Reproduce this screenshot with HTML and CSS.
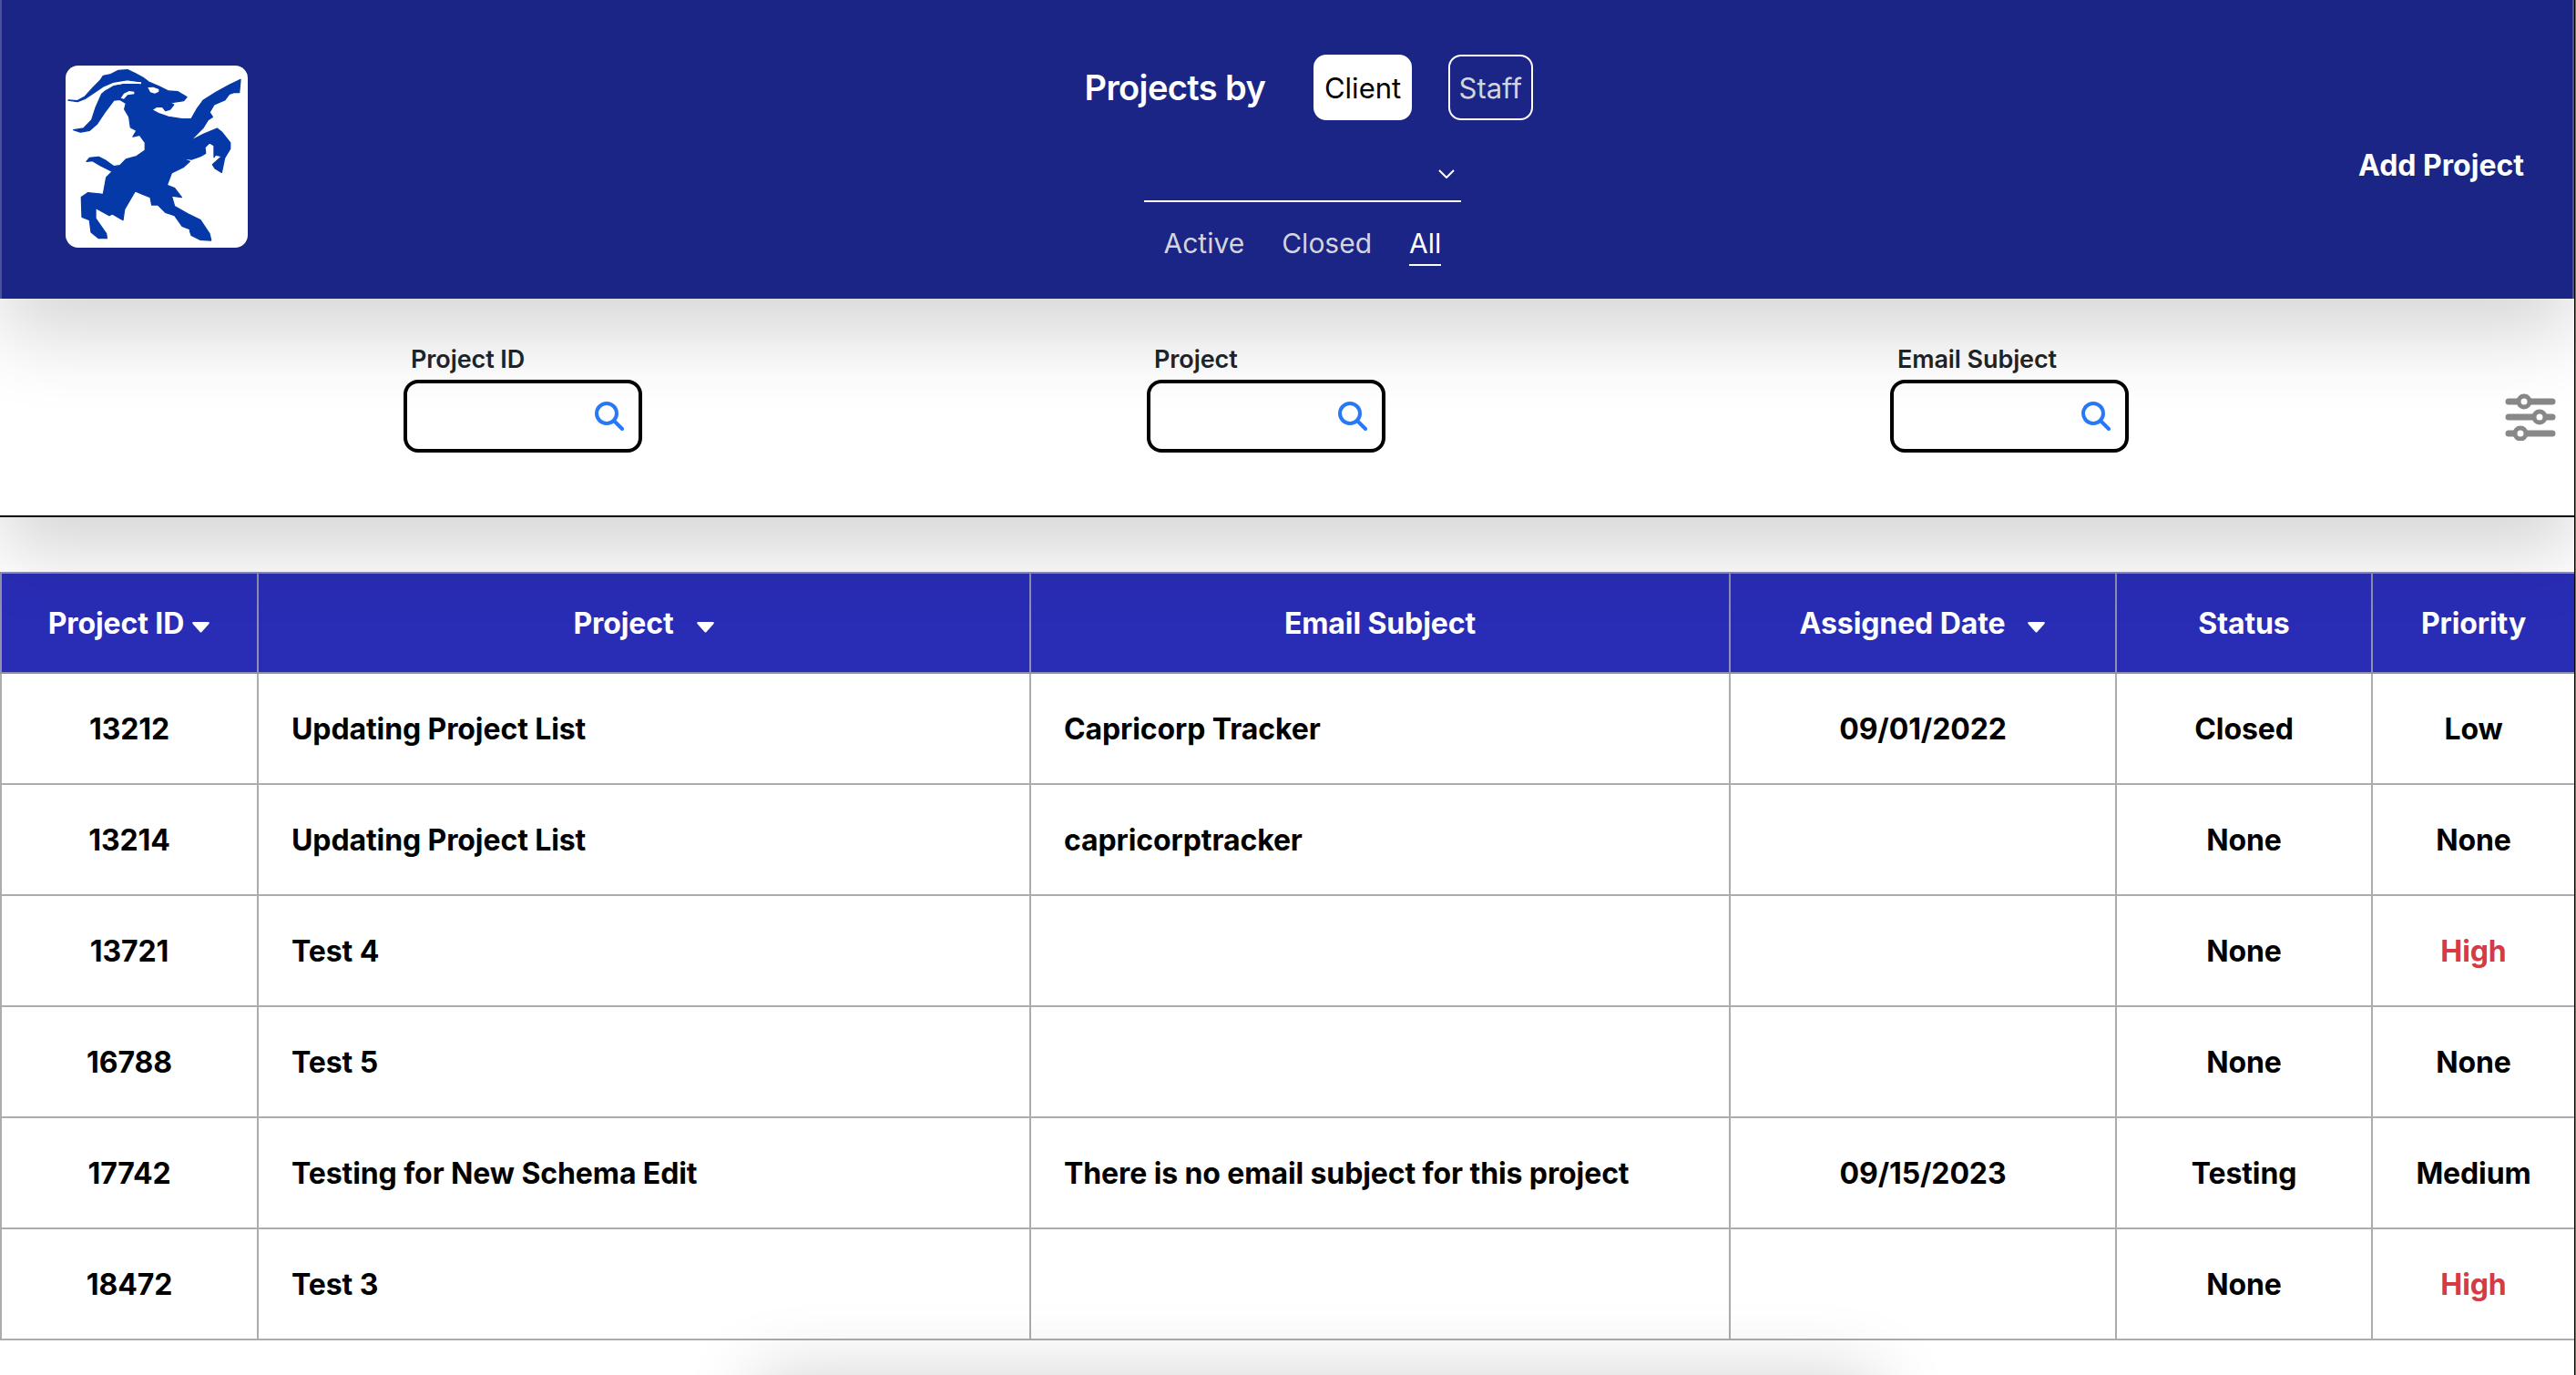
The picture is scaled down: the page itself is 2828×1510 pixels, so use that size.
FILE: index.html
```html
<!DOCTYPE html>
<html>
<head>
  <link rel="stylesheet" href="styles.css">
  <title>Projects</title>
  <meta charset="UTF-8">
</head>
<body>
  <div class="page">
    <header class="topbar">
      <div class="logo">
        <svg class="logo-goat" viewBox="36 36 600 600">
          <path fill="#0639a8" stroke="#0639a8" stroke-width="4" stroke-linejoin="round" d="M45 150 L75 152 L100 138 L125 110 L150 85 L160 70 L185 65 L210 52 L240 50 L265 62 L290 75 L310 90 L345 105 L375 120 L405 122 L435 140 L425 152 L390 157 L375 155 L392 165 L380 180 L365 185 L355 172 L335 172 L320 182 L345 195 L375 205 L420 212 L450 212 L468 180 L490 150 L530 125 L575 100 L612 82 L608 125 L590 125 L575 130 L560 150 L525 165 L510 190 L520 205 L505 215 L490 240 L455 275 L445 285 L490 262 L535 243 L550 255 L578 290 L578 310 L560 340 L550 388 L528 375 L520 362 L550 335 L530 330 L525 338 L525 300 L510 290 L495 305 L497 325 L480 335 L450 345 L415 340 L445 352 L425 370 L385 390 L370 430 L395 440 L418 470 L385 465 L395 500 L440 525 L480 545 L510 590 L515 612 L480 610 L450 595 L445 580 L455 565 L445 575 L420 565 L395 530 L365 520 L340 495 L320 495 L315 470 L290 460 L265 450 L230 510 L225 545 L190 525 L180 530 L135 505 L135 540 L170 590 L172 605 L145 605 L120 585 L115 545 L90 535 L88 470 L110 455 L160 460 L170 405 L190 385 L150 365 L125 350 L105 352 L115 340 L145 337 L170 350 L195 368 L215 365 L235 345 L270 335 L298 315 L298 290 L280 265 L258 270 L270 250 L250 240 L245 205 L230 180 L235 160 L215 148 L195 150 L165 190 L140 228 L115 250 L85 255 L62 248 L95 243 L122 215 L135 175 L155 130 L185 105 L225 98 L283 98 L285 91 L240 83 L195 90 L160 105 L130 125 L100 145 L75 155 Z"/>
          <path fill="none" stroke="#fff" stroke-width="6" d="M168 114 L195 98 L240 90 L285 94"/>
          <path fill="#fff" d="M218 143 L228 128 L245 120 L262 122 L262 130 L240 133 L228 146 Z"/>
          <path fill="#fff" d="M307 108 L325 107 L343 114 L343 122 L330 128 L315 124 Z"/>
        </svg>
      </div>
      <div class="switcher">
        <div class="switcher-top">
          <span class="switcher-title">Projects by</span>
          <button class="pill pill-on">Client</button>
          <button class="pill">Staff</button>
        </div>
        <div class="client-select">
          <svg class="chevron" viewBox="0 0 18 10"><path d="M1 1 L9 9 L17 1" fill="none" stroke="#fff" stroke-width="2"/></svg>
        </div>
        <div class="tabs">
          <span class="tab">Active</span>
          <span class="tab">Closed</span>
          <span class="tab tab-on">All</span>
        </div>
      </div>
      <a class="add-project">Add Project</a>
    </header>

    <section class="filters">
      <div class="filter">
        <label>Project ID</label>
        <div class="search-box">
          <svg class="search-icon" viewBox="0 0 32 32"><circle cx="13" cy="13" r="11" fill="none" stroke="#2979f2" stroke-width="4"/><path d="M21 21 L30 30" stroke="#2979f2" stroke-width="4" stroke-linecap="round"/></svg>
        </div>
      </div>
      <div class="filter">
        <label>Project</label>
        <div class="search-box">
          <svg class="search-icon" viewBox="0 0 32 32"><circle cx="13" cy="13" r="11" fill="none" stroke="#2979f2" stroke-width="4"/><path d="M21 21 L30 30" stroke="#2979f2" stroke-width="4" stroke-linecap="round"/></svg>
        </div>
      </div>
      <div class="filter">
        <label>Email Subject</label>
        <div class="search-box">
          <svg class="search-icon" viewBox="0 0 32 32"><circle cx="13" cy="13" r="11" fill="none" stroke="#2979f2" stroke-width="4"/><path d="M21 21 L30 30" stroke="#2979f2" stroke-width="4" stroke-linecap="round"/></svg>
        </div>
      </div>
      <svg class="sliders" viewBox="0 0 56 52">
        <g fill="none" stroke="#888" stroke-width="7" stroke-linecap="round">
          <path d="M4 9 H52"/><path d="M4 26 H52"/><path d="M4 44 H52"/>
        </g>
        <g fill="#fff" stroke="#888" stroke-width="5">
          <circle cx="21" cy="9" r="6"/><circle cx="38" cy="26" r="6"/><circle cx="17" cy="44" r="6"/>
        </g>
      </svg>
    </section>

    <table class="projects">
      <colgroup>
        <col class="col-id"><col class="col-name"><col class="col-subject"><col class="col-date"><col class="col-status"><col class="col-priority">
      </colgroup>
      <thead>
        <tr>
          <th>Project ID<svg class="caret caret-near" viewBox="0 0 20 14"><path d="M2 1 H18 Q20 1 19 3 L11 12 Q10 13 9 12 L1 3 Q0 1 2 1 Z" fill="#fff"/></svg></th>
          <th>Project<svg class="caret" viewBox="0 0 20 14"><path d="M2 1 H18 Q20 1 19 3 L11 12 Q10 13 9 12 L1 3 Q0 1 2 1 Z" fill="#fff"/></svg></th>
          <th>Email Subject</th>
          <th>Assigned Date<svg class="caret" viewBox="0 0 20 14"><path d="M2 1 H18 Q20 1 19 3 L11 12 Q10 13 9 12 L1 3 Q0 1 2 1 Z" fill="#fff"/></svg></th>
          <th>Status</th>
          <th>Priority</th>
        </tr>
      </thead>
      <tbody>
        <tr><td>13212</td><td class="left">Updating Project List</td><td class="left">Capricorp Tracker</td><td>09/01/2022</td><td>Closed</td><td>Low</td></tr>
        <tr><td>13214</td><td class="left">Updating Project List</td><td class="left">capricorptracker</td><td></td><td>None</td><td>None</td></tr>
        <tr><td>13721</td><td class="left">Test 4</td><td class="left"></td><td></td><td>None</td><td class="high">High</td></tr>
        <tr><td>16788</td><td class="left">Test 5</td><td class="left"></td><td></td><td>None</td><td>None</td></tr>
        <tr><td>17742</td><td class="left">Testing for New Schema Edit</td><td class="left">There is no email subject for this project</td><td>09/15/2023</td><td>Testing</td><td>Medium</td></tr>
        <tr><td>18472</td><td class="left">Test 3</td><td class="left"></td><td></td><td>None</td><td class="high">High</td></tr>
      </tbody>
    </table>

    <div class="pager-shadow"></div>
  </div>
</body>
</html>
```

FILE: styles.css
```css
html, body {
  margin: 0;
  height: 1510px;
  overflow: hidden;
  background: #77774f;
}

.page {
  width: 2826px;
  height: 1510px;
  overflow: hidden;
  background: #fff;
  border-right: 1px solid #000;
  font-family: Inter, "Liberation Sans", sans-serif;
}

/* top bar */
.topbar {
  position: relative;
  z-index: 2;
  display: flex;
  justify-content: space-between;
  align-items: flex-start;
  box-sizing: border-box;
  height: 328px;
  padding: 60px 53px 0 70px;
  background: #1a2585;
  border-left: 2px solid #4a5099;
  border-right: 2px solid #4a5099;
  box-shadow: 0 40px 80px rgba(0, 0, 0, 0.16);
}

.logo {
  width: 200px;
  height: 200px;
  margin-top: 12px;
  background: #fff;
  border-radius: 14px;
}

.logo-goat {
  display: block;
  width: 200px;
  height: 200px;
}

.switcher {
  width: 492px;
  margin-left: 12px;
}

.switcher-top {
  display: flex;
  align-items: center;
}

.switcher-title {
  margin-right: 53px;
  font-size: 38px;
  font-weight: 600;
  white-space: nowrap;
  letter-spacing: -0.6px;
  color: #fff;
}

.pill {
  box-sizing: border-box;
  height: 72px;
  padding: 0;
  width: 93px;
  border: 2px solid #fff;
  border-radius: 14px;
  background: transparent;
  font-family: inherit;
  font-size: 31px;
  color: #d4d4dc;
}

.pill-on {
  width: 108px;
  margin-right: 40px;
  background: #fff;
  color: #000;
}

.client-select {
  display: flex;
  justify-content: flex-end;
  align-items: flex-start;
  box-sizing: border-box;
  width: 348px;
  height: 31px;
  margin: 59px 0 0 65px;
  padding-right: 7px;
  border-bottom: 2px solid #fff;
}

.chevron {
  width: 18px;
  height: 10px;
  margin-top: -5px;
}

.tabs {
  display: flex;
  gap: 41px;
  margin: 27px 0 0 87px;
}

.tab {
  padding-bottom: 5px;
  font-size: 30px;
  color: #d4d4dc;
}

.tab-on {
  color: #fff;
  border-bottom: 2px solid #fff;
}

.add-project {
  margin-top: 102px;
  font-size: 32px;
  font-weight: 700;
  color: #fff;
}

/* search row */
.filters {
  position: relative;
  z-index: 1;
  display: grid;
  grid-template-columns: 816px 816px 816px 1fr;
  align-items: center;
  box-sizing: border-box;
  height: 240px;
  padding-left: 166px;
  background: #fff;
  border-bottom: 2px solid #000;
  box-shadow: 0 40px 80px rgba(0, 0, 0, 0.16);
}

.filter {
  width: 262px;
  margin: -18px auto 0;
}

.filter label {
  display: block;
  margin: 0 0 6px 8px;
  font-size: 27px;
  font-weight: 600;
  line-height: 32px;
  letter-spacing: -0.1px;
  color: #212529;
}

.search-box {
  display: flex;
  justify-content: flex-end;
  align-items: center;
  box-sizing: border-box;
  height: 80px;
  padding-right: 16px;
  border: 4px solid #000;
  border-radius: 16px;
  background: #fff;
}

.search-icon {
  width: 32px;
  height: 32px;
}

.sliders {
  justify-self: end;
  width: 56px;
  height: 52px;
  margin: 22px 20px 0 0;
}

/* table */
.projects {
  width: 2826px;
  margin-top: 60px;
  table-layout: fixed;
  border-collapse: collapse;
  font-size: 32px;
  font-weight: 700;
  letter-spacing: -0.1px;
  color: #000;
}

.col-id { width: 282px; }
.col-name { width: 848px; }
.col-subject { width: 768px; }
.col-date { width: 424px; }
.col-status { width: 281px; }
.col-priority { width: 223px; }

.projects th {
  box-sizing: border-box;
  height: 110px;
  padding: 0;
  background: #292db5;
  border: 2px solid #8f8fae;
  color: #fff;
  font-weight: 700;
}

.projects td {
  box-sizing: border-box;
  height: 122px;
  padding: 0;
  border: 2px solid #acacac;
  text-align: center;
}

.projects td.left {
  padding-left: 36px;
  text-align: left;
}

.projects td.high {
  color: #d63a42;
}

.caret {
  width: 21px;
  height: 14px;
  margin-left: 24px;
}

.caret-near {
  margin-left: 8px;
}

/* something below the fold throws a shadow up over the last row */
.pager-shadow {
  width: 1230px;
  height: 100px;
  margin: 38px 0 0 830px;
  box-shadow: 0 0 80px rgba(0, 0, 0, 0.18);
}
```
